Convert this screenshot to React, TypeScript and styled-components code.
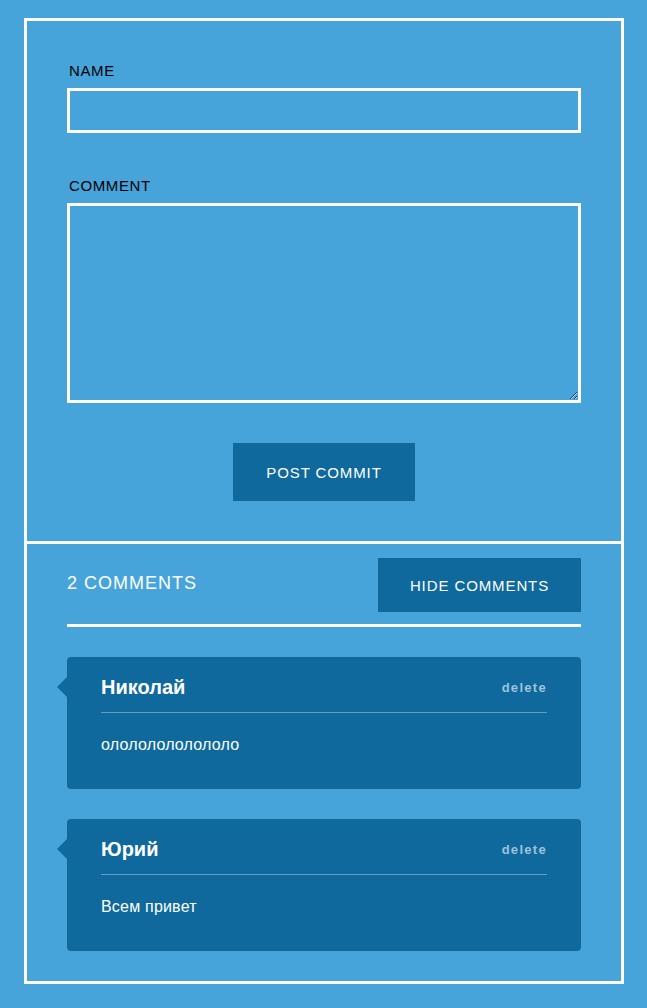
import React from "react";
import styled, { createGlobalStyle } from "styled-components";

const Global = createGlobalStyle`
  html, body {
    margin: 0;
    padding: 0;
    background: #46a4db;
  }
  body {
    font-family: "Liberation Sans", Arial, Helvetica, sans-serif;
  }
  * { box-sizing: border-box; }
`;

const Page = styled.div`
  padding: 18px 23px 24px 24px;
`;

const Frame = styled.div`
  width: 600px;
  border: 3px solid #fff;
`;

const FormSection = styled.form`
  display: flex;
  flex-direction: column;
  padding: 41px 40px 40px 40px;
  border-bottom: 3px solid #fff;
`;

const Label = styled.label`
  display: block;
  font-size: 15px;
  line-height: 17px;
  letter-spacing: 0.6px;
  color: #000;
  text-transform: uppercase;
  margin: 0 0 9px 2px;
`;

const TextInput = styled.input`
  display: block;
  width: 100%;
  height: 45px;
  border: 3px solid #fff;
  background: transparent;
  outline: none;
  margin-bottom: 44px;
  font: inherit;
`;

const TextArea = styled.textarea`
  display: block;
  width: 100%;
  height: 200px;
  border: 3px solid #fff;
  background: transparent;
  outline: none;
  resize: vertical;
  font: inherit;
  margin: 0 0 40px 0;
`;

const Button = styled.button<{ $w: number; $h: number }>`
  width: ${(p) => p.$w}px;
  height: ${(p) => p.$h}px;
  border: none;
  background: #10699d;
  color: #fff;
  font-family: "Liberation Sans", Arial, Helvetica, sans-serif;
  font-size: 15px;
  letter-spacing: 0.9px;
  text-transform: uppercase;
  cursor: pointer;
  padding: 0;
`;

const Center = styled.div`
  display: flex;
  justify-content: center;
`;

const CommentsSection = styled.section`
  padding: 14px 40px 30px 40px;
`;

const CommentsHeader = styled.div`
  display: flex;
  align-items: center;
  justify-content: space-between;
  padding-bottom: 12px;
  border-bottom: 3px solid #fff;
  margin-bottom: 30px;
`;

const Count = styled.h2`
  margin: 0;
  font-size: 18px;
  font-weight: normal;
  letter-spacing: 1px;
  color: #fff;
  text-transform: uppercase;
  position: relative;
  top: -2px;
`;

const List = styled.div`
  display: flex;
  flex-direction: column;
  gap: 30px;
`;

const Card = styled.article`
  position: relative;
  background: #10699d;
  border-radius: 4px;
  padding: 18px 34px 34px 34px;
  color: #fff;

  &::before {
    content: "";
    position: absolute;
    left: -10px;
    top: 20px;
    border-top: 10px solid transparent;
    border-bottom: 10px solid transparent;
    border-right: 10px solid #10699d;
  }
`;

const CardHead = styled.div`
  display: flex;
  align-items: center;
  justify-content: space-between;
  padding-bottom: 13px;
  border-bottom: 1px solid rgba(255, 255, 255, 0.35);
`;

const Author = styled.h3`
  margin: 0;
  font-size: 20px;
  line-height: 24px;
  font-weight: bold;
`;

const Delete = styled.a`
  font-size: 13px;
  font-weight: bold;
  letter-spacing: 1.3px;
  color: #9ec3da;
  cursor: pointer;
`;

const Body = styled.p`
  margin: 22px 0 0 0;
  font-size: 16px;
  line-height: 20px;
  letter-spacing: 0.2px;
`;

const comments = [
  { id: 1, author: "Николай", text: "олололололололо" },
  { id: 2, author: "Юрий", text: "Всем привет" },
];

export default function App() {
  return (
    <>
      <Global />
      <Page>
        <Frame>
          <FormSection onSubmit={(e) => e.preventDefault()}>
            <Label htmlFor="name">Name</Label>
            <TextInput id="name" type="text" />
            <Label htmlFor="comment">Comment</Label>
            <TextArea id="comment" />
            <Center>
              <Button type="submit" $w={182} $h={58}>
                Post commit
              </Button>
            </Center>
          </FormSection>
          <CommentsSection>
            <CommentsHeader>
              <Count>2 comments</Count>
              <Button type="button" $w={203} $h={54}>
                Hide comments
              </Button>
            </CommentsHeader>
            <List>
              {comments.map((c) => (
                <Card key={c.id}>
                  <CardHead>
                    <Author>{c.author}</Author>
                    <Delete>delete</Delete>
                  </CardHead>
                  <Body>{c.text}</Body>
                </Card>
              ))}
            </List>
          </CommentsSection>
        </Frame>
      </Page>
    </>
  );
}
